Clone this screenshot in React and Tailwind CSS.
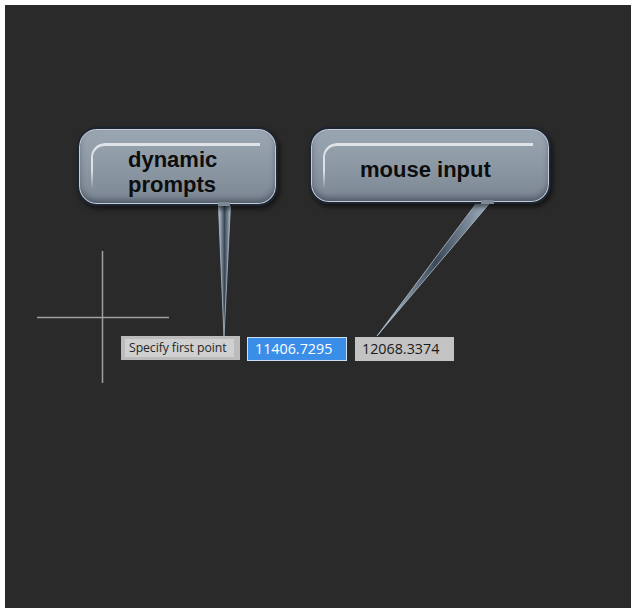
import React from "react";

// Glossy callout bubble
function Bubble({ className, children }) {
  return (
    <div
      className={`absolute rounded-[20px] border-2 border-[#1c2531] bg-gradient-to-b from-[#9ba6b3] via-[#8d98a5] to-[#7b8693] shadow-[2px_3px_5px_rgba(0,0,0,0.55),inset_0_0_0_1px_#c3ccd7,inset_0_-4px_6px_rgba(20,30,45,0.45)] ${className}`}
    >
      <div className="absolute left-[12px] top-[14px] right-[16px] h-[46px] rounded-tl-[14px] border-l-2 border-t-[3px] border-white/70 [mask-image:linear-gradient(to_bottom,black_60%,transparent)]" />
      {children}
    </div>
  );
}

export default function App() {
  return (
    <div className="w-[631px] h-[608px] bg-white pl-[5px] pt-[5px]">
      <div className="relative h-[603px] bg-[#2a2a2a] overflow-hidden">
        {/* tails + crosshair */}
        <svg className="absolute inset-0 w-full h-full pointer-events-none" viewBox="0 0 626 603">
          <defs>
            <linearGradient id="tail" x1="0" y1="0" x2="1" y2="0">
              <stop offset="0" stopColor="#c2d0de" />
              <stop offset="0.5" stopColor="#3a4858" />
              <stop offset="1" stopColor="#b0bfcf" />
            </linearGradient>
          </defs>
          <line x1="97.5" y1="246" x2="97.5" y2="378" stroke="#a0a0a0" strokeWidth="1.5" />
          <line x1="32" y1="312.5" x2="164" y2="312.5" stroke="#a0a0a0" strokeWidth="1.5" />
          <polygon points="213,190 226,190 219,332" fill="url(#tail)" stroke="#aebdcc" strokeWidth="0.8" />
          <polygon points="476,192 490,192 372,331" fill="url(#tail)" stroke="#aebdcc" strokeWidth="0.8" />
        </svg>

        <Bubble className="left-[72px] top-[122px] w-[201px] h-[79px]">
          <div className="relative pl-[49px] pt-[18px] font-['Liberation_Sans',Arial,sans-serif] font-bold text-[22px] leading-[25px] text-[#0d0d0d]">
            <div>dynamic</div>
            <div>prompts</div>
          </div>
          <div className="absolute left-[139px] -bottom-[2px] w-[12px] h-[4px] bg-[#7d8895]" />
        </Bubble>

        <Bubble className="left-[304px] top-[122px] w-[242px] h-[77px]">
          <div className="relative pl-[49px] pt-[29px] font-['Liberation_Sans',Arial,sans-serif] font-bold text-[22px] leading-[24px] text-[#0d0d0d]">
            mouse input
          </div>
          <div className="absolute left-[170px] -bottom-[2px] w-[13px] h-[4px] bg-[#7d8895]" />
        </Bubble>

        {/* dynamic input row */}
        <div className="absolute left-[116px] top-[331px] flex items-start gap-[7px] font-['Open_Sans','Noto_Sans',sans-serif]">
          <div className="w-[119px] h-[24px] bg-[#bcbcbc] py-[3px] pl-[4px] pr-[6px]">
            <div className="h-full bg-[#d0d0d0] flex items-center pl-[4px] text-[12.3px] tracking-[-0.1px] text-[#262626] whitespace-nowrap">
              Specify first point
            </div>
          </div>
          <div className="w-[100px] h-[24px] mt-[1px] bg-[#3a8ee8] border border-[#d0e0f4] flex items-center pl-[7px] text-[14.3px] text-white">
            11406.7295
          </div>
          <div className="w-[99px] h-[24px] mt-[1px] ml-[1px] bg-[#c3c3c3] flex items-center pl-[7px] text-[14.3px] text-[#1a1a1a]">
            12068.3374
          </div>
        </div>
      </div>
    </div>
  );
}
